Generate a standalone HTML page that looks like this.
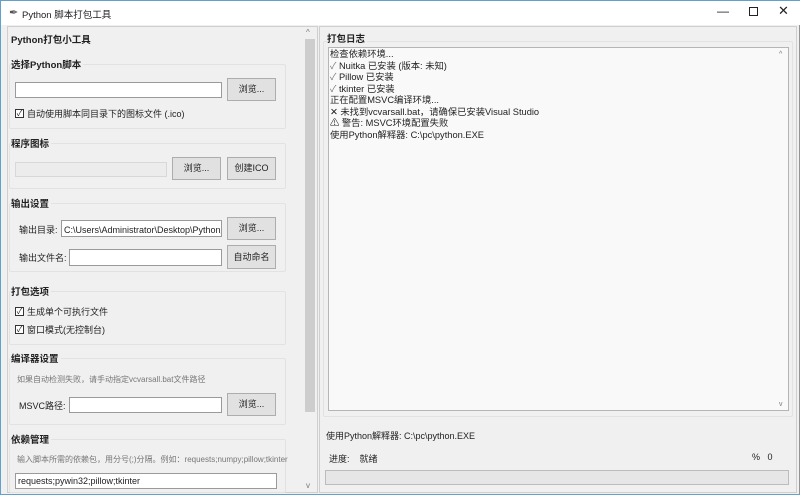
<!DOCTYPE html>
<html><head><meta charset="utf-8"><style>
*{box-sizing:border-box;margin:0;padding:0}
body{width:800px;height:495px;background:#f0f0f0;font-family:"Liberation Sans","Noto Sans CJK SC",sans-serif;font-size:9px;color:#222;position:relative;overflow:hidden;border:1px solid #7a9ab0}
.a{position:absolute}
.tb{left:0;top:0;width:800px;height:24px;background:#fff}
.b{font-weight:bold;font-size:9.5px;background:#f0f0f0;padding-right:2px;z-index:2}
.box{border:1px solid #e2e2e2;border-radius:2px}
.en{background:#fff;border:1px solid #9a9a9a}
.btn{background:#e1e1e1;border:1px solid #adadad;text-align:center;font-size:9px}
.ck{width:9px;height:9px;border:1px solid #333;background:#fff;font-size:8px;line-height:7px;text-align:center}
.g{color:#777}
</style></head><body>
<div class="a tb"></div>
<div class="a" style="left:8px;top:5px;font-size:11px;color:#555">&#10002;</div>
<div class="a" style="left:21px;top:6px;font-size:9.5px">Python 脚本打包工具</div>
<div class="a" style="left:716px;top:3px;font-size:12px">—</div>
<div class="a" style="left:748px;top:6px;width:9px;height:9px;border:1px solid #222"></div>
<div class="a" style="left:777px;top:2px;font-size:13px">✕</div>

<div class="a" style="left:6px;top:25px;width:311px;height:467px;border:1px solid #cfcfcf"></div>
<div class="a b" style="left:10px;top:31px">Python打包小工具</div>

<div class="a box" style="left:8px;top:63px;width:277px;height:65px"></div>
<div class="a b" style="left:10px;top:56px">选择Python脚本</div>
<div class="a en" style="left:14px;top:81px;width:207px;height:16px"></div>
<div class="a btn" style="left:226px;top:77px;width:49px;height:23px;line-height:21px">浏览...</div>
<div class="a ck" style="left:14px;top:108px">✓</div>
<div class="a" style="left:26px;top:106px">自动使用脚本同目录下的图标文件 (.ico)</div>

<div class="a box" style="left:8px;top:142px;width:277px;height:46px"></div>
<div class="a b" style="left:10px;top:135px">程序图标</div>
<div class="a" style="left:14px;top:161px;width:152px;height:15px;border:1px solid #d8d8d8;background:#ececec"></div>
<div class="a btn" style="left:171px;top:156px;width:49px;height:23px;line-height:21px">浏览...</div>
<div class="a btn" style="left:226px;top:156px;width:49px;height:23px;line-height:21px">创建ICO</div>

<div class="a box" style="left:8px;top:202px;width:277px;height:69px"></div>
<div class="a b" style="left:10px;top:195px">输出设置</div>
<div class="a" style="left:18px;top:222px">输出目录:</div>
<div class="a en" style="left:60px;top:219px;width:161px;height:17px;padding:2px 2px;white-space:nowrap;overflow:hidden">C:\Users\Administrator\Desktop\Python脚</div>
<div class="a btn" style="left:226px;top:216px;width:49px;height:23px;line-height:21px">浏览...</div>
<div class="a" style="left:18px;top:250px">输出文件名:</div>
<div class="a en" style="left:68px;top:248px;width:153px;height:17px"></div>
<div class="a btn" style="left:226px;top:244px;width:49px;height:24px;line-height:22px">自动命名</div>

<div class="a box" style="left:8px;top:290px;width:277px;height:54px"></div>
<div class="a b" style="left:10px;top:283px">打包选项</div>
<div class="a ck" style="left:14px;top:306px">✓</div>
<div class="a" style="left:26px;top:304px">生成单个可执行文件</div>
<div class="a ck" style="left:14px;top:324px">✓</div>
<div class="a" style="left:26px;top:322px">窗口模式(无控制台)</div>

<div class="a box" style="left:8px;top:357px;width:277px;height:67px"></div>
<div class="a b" style="left:10px;top:350px">编译器设置</div>
<div class="a g" style="left:16px;top:373px;font-size:8px">如果自动检测失败，请手动指定vcvarsall.bat文件路径</div>
<div class="a" style="left:18px;top:398px">MSVC路径:</div>
<div class="a en" style="left:68px;top:396px;width:153px;height:16px"></div>
<div class="a btn" style="left:226px;top:392px;width:49px;height:23px;line-height:21px">浏览...</div>

<div class="a box" style="left:8px;top:438px;width:277px;height:54px"></div>
<div class="a b" style="left:10px;top:431px">依赖管理</div>
<div class="a g" style="left:16px;top:453px;font-size:8px">输入脚本所需的依赖包，用分号(;)分隔。例如：requests;numpy;pillow;tkinter</div>
<div class="a en" style="left:14px;top:472px;width:262px;height:16px;padding:2px 2px">requests;pywin32;pillow;tkinter</div>

<div class="a" style="left:302px;top:26px;width:14px;height:465px;background:#f0f0f0"></div>
<div class="a" style="left:304px;top:38px;width:10px;height:373px;background:#cdcdcd"></div>
<div class="a g" style="left:305px;top:27px;font-size:8px">^</div>
<div class="a g" style="left:305px;top:480px;font-size:8px">v</div>

<div class="a" style="left:318px;top:25px;width:478px;height:467px;border:1px solid #cfcfcf"></div>
<div class="a box" style="left:322px;top:40px;width:470px;height:376px"></div>
<div class="a b" style="left:326px;top:30px">打包日志</div>
<div class="a" style="left:327px;top:46px;width:461px;height:364px;background:#f9f9f9;border:1px solid #b5b5b5"></div>
<div class="a" style="left:329px;top:48px;line-height:11.5px;font-size:9.3px">
检查依赖环境...<br><span class="g">✓</span> Nuitka 已安装 (版本: 未知)<br><span class="g">✓</span> Pillow 已安装<br><span class="g">✓</span> tkinter 已安装<br>正在配置MSVC编译环境...<br>✕ 未找到vcvarsall.bat，请确保已安装Visual Studio<br>⚠ 警告: MSVC环境配置失败<br>使用Python解释器: C:\pc\python.EXE</div>
<div class="a g" style="left:778px;top:50px;font-size:7px">^</div>
<div class="a g" style="left:778px;top:400px;font-size:7px">v</div>
<div class="a" style="left:325px;top:428px">使用Python解释器: C:\pc\python.EXE</div>
<div class="a" style="left:328px;top:451px">进度:&nbsp;&nbsp;&nbsp;&nbsp;就绪</div>
<div class="a" style="left:751px;top:451px">%&nbsp;&nbsp;&nbsp;0</div>
<div class="a" style="left:324px;top:469px;width:464px;height:15px;background:#e6e6e6;border:1px solid #bcbcbc"></div>
</body></html>
